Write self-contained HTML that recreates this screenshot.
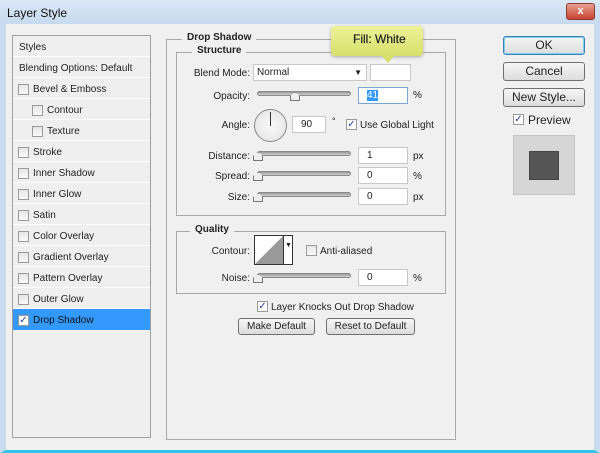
<!DOCTYPE html>
<html><head><meta charset="utf-8"><style>
*{box-sizing:border-box;margin:0;padding:0}
body{width:600px;height:453px;overflow:hidden;background:#f0f0f0;font-family:"Liberation Sans",sans-serif;font-size:10px;color:#222;position:relative}
.a{position:absolute}
.title{left:0;top:0;width:600px;height:24px;background:linear-gradient(#dbe8f6,#c6d9ee);}
.frame{left:0;top:24px;width:600px;height:429px;border-left:6px solid #c8dbef;border-right:6px solid #c8dbef;border-bottom:3px solid #2fc3e8;background:#f0f0f0}
.list{left:12px;top:35px;width:139px;height:403px;border:1px solid #a0a0a0;background:#efefef}
.row{position:absolute;left:0;width:137px;height:21px;border-bottom:1px solid #fff;line-height:23px;padding-left:6px}
.cb{position:absolute;width:11px;height:11px;border:1px solid #9a9a9a;background:linear-gradient(#e6e6e6,#fafafa);top:6px}
.grp{border:1px solid #a8a8a8}
.lbl{position:absolute;background:#f0f0f0;font-weight:bold;padding:0 5px}
.r{position:absolute;text-align:right}
.inp{position:absolute;background:#fff;border:1px solid #c8c8c8;height:17px;line-height:15px;padding-left:8px}
.sl{position:absolute;height:5px;border-radius:3px;background:linear-gradient(#9a9a9a,#d0d0d0);border:1px solid #8a8a8a}
.btn{position:absolute;border:1px solid #707070;border-radius:3px;background:linear-gradient(#f6f6f6,#dcdcdc);text-align:center;font-size:12px}
</style></head><body>
<div class="a title"></div>
<div class="a" style="left:7px;top:6px;font-size:12px;color:#111">Layer Style</div>
<div class="a" style="left:566px;top:3px;width:29px;height:17px;border-radius:3px;border:1px solid #8a3a2e;background:linear-gradient(#e8a193,#c8432f);color:#fff;font-weight:bold;text-align:center;font-size:11px;line-height:15px">x</div>
<div class="a frame"></div>

<div class="a list">
<div class="row" style="top:0">Styles</div>
<div class="row" style="top:21px">Blending Options: Default</div>
<div class="row" style="top:42px"><span class="cb" style="left:5px"></span><span style="margin-left:14px">Bevel &amp; Emboss</span></div>
<div class="row" style="top:63px"><span class="cb" style="left:19px"></span><span style="margin-left:28px">Contour</span></div>
<div class="row" style="top:84px"><span class="cb" style="left:19px"></span><span style="margin-left:28px">Texture</span></div>
<div class="row" style="top:105px"><span class="cb" style="left:5px"></span><span style="margin-left:14px">Stroke</span></div>
<div class="row" style="top:126px"><span class="cb" style="left:5px"></span><span style="margin-left:14px">Inner Shadow</span></div>
<div class="row" style="top:147px"><span class="cb" style="left:5px"></span><span style="margin-left:14px">Inner Glow</span></div>
<div class="row" style="top:168px"><span class="cb" style="left:5px"></span><span style="margin-left:14px">Satin</span></div>
<div class="row" style="top:189px"><span class="cb" style="left:5px"></span><span style="margin-left:14px">Color Overlay</span></div>
<div class="row" style="top:210px"><span class="cb" style="left:5px"></span><span style="margin-left:14px">Gradient Overlay</span></div>
<div class="row" style="top:231px"><span class="cb" style="left:5px"></span><span style="margin-left:14px">Pattern Overlay</span></div>
<div class="row" style="top:252px"><span class="cb" style="left:5px"></span><span style="margin-left:14px">Outer Glow</span></div>
<div class="row" style="top:273px;background:#3399ff;color:#111;border-bottom:none"><span class="cb" style="left:5px;background:#fff;color:#2a3fa0;font-size:10px;line-height:9px;text-align:center">✓</span><span style="margin-left:14px">Drop Shadow</span></div>
</div>

<div class="a grp" style="left:166px;top:39px;width:290px;height:401px"></div>
<div class="lbl" style="left:182px;top:32px">Drop Shadow</div>
<div class="a grp" style="left:176px;top:52px;width:270px;height:164px"></div>
<div class="lbl" style="left:192px;top:45px">Structure</div>

<div class="r" style="left:170px;width:80px;top:68px">Blend Mode:</div>
<div class="inp" style="left:253px;top:64px;width:114px;padding-left:3px">Normal<span style="position:absolute;right:4px;top:0;font-size:8px">▼</span></div>
<div class="inp" style="left:370px;top:64px;width:41px"></div>

<div class="r" style="left:170px;width:80px;top:91px">Opacity:</div>
<div class="sl" style="left:257px;top:91px;width:94px"></div>
<div class="a" style="left:290px;top:92px;width:10px;height:9px;background:#eee;border:1px solid #777;clip-path:polygon(50% 0,100% 45%,100% 100%,0 100%,0 45%)"></div>
<div class="inp" style="left:358px;top:87px;width:50px;border-color:#7aa6d6"><span style="background:#3399ff;color:#fff">41</span></div>
<div class="a" style="left:413px;top:90px">%</div>

<div class="r" style="left:170px;width:80px;top:120px">Angle:</div>
<div class="a" style="left:254px;top:109px;width:33px;height:33px;border-radius:50%;border:1px solid #888;background:radial-gradient(#fafafa,#e0e0e0)"></div>
<div class="a" style="left:270px;top:112px;width:1px;height:14px;background:#333"></div>
<div class="inp" style="left:292px;top:116px;width:34px">90</div>
<div class="a" style="left:332px;top:116px;font-size:9px">°</div>
<div class="cb" style="left:346px;top:119px;background:#fff;color:#2a3fa0;font-size:10px;line-height:9px;text-align:center">✓</div>
<div class="a" style="left:360px;top:120px">Use Global Light</div>

<div class="r" style="left:170px;width:80px;top:151px">Distance:</div>
<div class="sl" style="left:257px;top:151px;width:94px"></div>
<div class="inp" style="left:358px;top:147px;width:50px">1</div>
<div class="a" style="left:413px;top:151px">px</div>
<div class="r" style="left:170px;width:80px;top:171px">Spread:</div>
<div class="sl" style="left:257px;top:171px;width:94px"></div>
<div class="inp" style="left:358px;top:167px;width:50px">0</div>
<div class="a" style="left:413px;top:171px">%</div>
<div class="r" style="left:170px;width:80px;top:192px">Size:</div>
<div class="sl" style="left:257px;top:192px;width:94px"></div>
<div class="inp" style="left:358px;top:188px;width:50px">0</div>
<div class="a" style="left:413px;top:192px">px</div>
<div class="a" style="left:253px;top:152px;width:10px;height:9px;background:#eee;border:1px solid #777;clip-path:polygon(50% 0,100% 45%,100% 100%,0 100%,0 45%)"></div>
<div class="a" style="left:253px;top:172px;width:10px;height:9px;background:#eee;border:1px solid #777;clip-path:polygon(50% 0,100% 45%,100% 100%,0 100%,0 45%)"></div>
<div class="a" style="left:253px;top:193px;width:10px;height:9px;background:#eee;border:1px solid #777;clip-path:polygon(50% 0,100% 45%,100% 100%,0 100%,0 45%)"></div>

<div class="a grp" style="left:176px;top:231px;width:270px;height:63px"></div>
<div class="lbl" style="left:190px;top:224px">Quality</div>
<div class="r" style="left:170px;width:80px;top:246px">Contour:</div>
<div class="a" style="left:254px;top:235px;width:39px;height:30px;border:1px solid #333;background:#fff">
<svg width="28" height="28" style="position:absolute;left:0;top:0"><polygon points="0,28 28,0 28,28" fill="#999"/></svg>
<div style="position:absolute;left:28px;top:0;width:1px;height:28px;background:#333"></div>
<div style="position:absolute;left:30px;top:6px;font-size:7px">▼</div></div>
<div class="cb" style="left:306px;top:245px"></div>
<div class="a" style="left:320px;top:246px">Anti-aliased</div>
<div class="r" style="left:170px;width:80px;top:273px">Noise:</div>
<div class="sl" style="left:257px;top:273px;width:94px"></div>
<div class="a" style="left:253px;top:274px;width:10px;height:9px;background:#eee;border:1px solid #777;clip-path:polygon(50% 0,100% 45%,100% 100%,0 100%,0 45%)"></div>
<div class="inp" style="left:358px;top:269px;width:50px">0</div>
<div class="a" style="left:413px;top:273px">%</div>

<div class="cb" style="left:257px;top:301px;background:#fff;color:#2a3fa0;font-size:10px;line-height:9px;text-align:center">✓</div>
<div class="a" style="left:271px;top:302px">Layer Knocks Out Drop Shadow</div>
<div class="btn" style="left:238px;top:318px;width:77px;height:17px;font-size:10px;line-height:15px">Make Default</div>
<div class="btn" style="left:326px;top:318px;width:89px;height:17px;font-size:10px;line-height:15px">Reset to Default</div>

<div class="a" style="left:331px;top:26px;width:92px;height:30px;border-radius:4px;background:linear-gradient(#eef39a,#d6df6a);box-shadow:0 1px 3px rgba(0,0,0,.3);font-size:12px;color:#222;padding:6px 0 0 22px;-webkit-text-stroke:0.2px #222">Fill: White</div>
<div class="a" style="left:382px;top:56px;width:12px;height:7px;background:#d6df6a;clip-path:polygon(0 0,100% 0,50% 100%)"></div>

<div class="btn" style="left:503px;top:36px;width:82px;height:19px;border-color:#3c7fb1;box-shadow:inset 0 0 0 1px #7fd0f0;line-height:17px">OK</div>
<div class="btn" style="left:503px;top:62px;width:82px;height:19px;line-height:17px">Cancel</div>
<div class="btn" style="left:503px;top:88px;width:82px;height:19px;line-height:17px">New Style...</div>
<div class="cb" style="left:513px;top:114px;background:#fff;color:#2a3fa0;font-size:10px;line-height:9px;text-align:center">✓</div>
<div class="a" style="left:528px;top:113px;font-size:12px">Preview</div>
<div class="a" style="left:513px;top:135px;width:62px;height:60px;background:#d6d6d6;border:1px solid #c4c4c4"></div>
<div class="a" style="left:529px;top:151px;width:30px;height:29px;background:#555;border:1px solid #444"></div>
</body></html>
